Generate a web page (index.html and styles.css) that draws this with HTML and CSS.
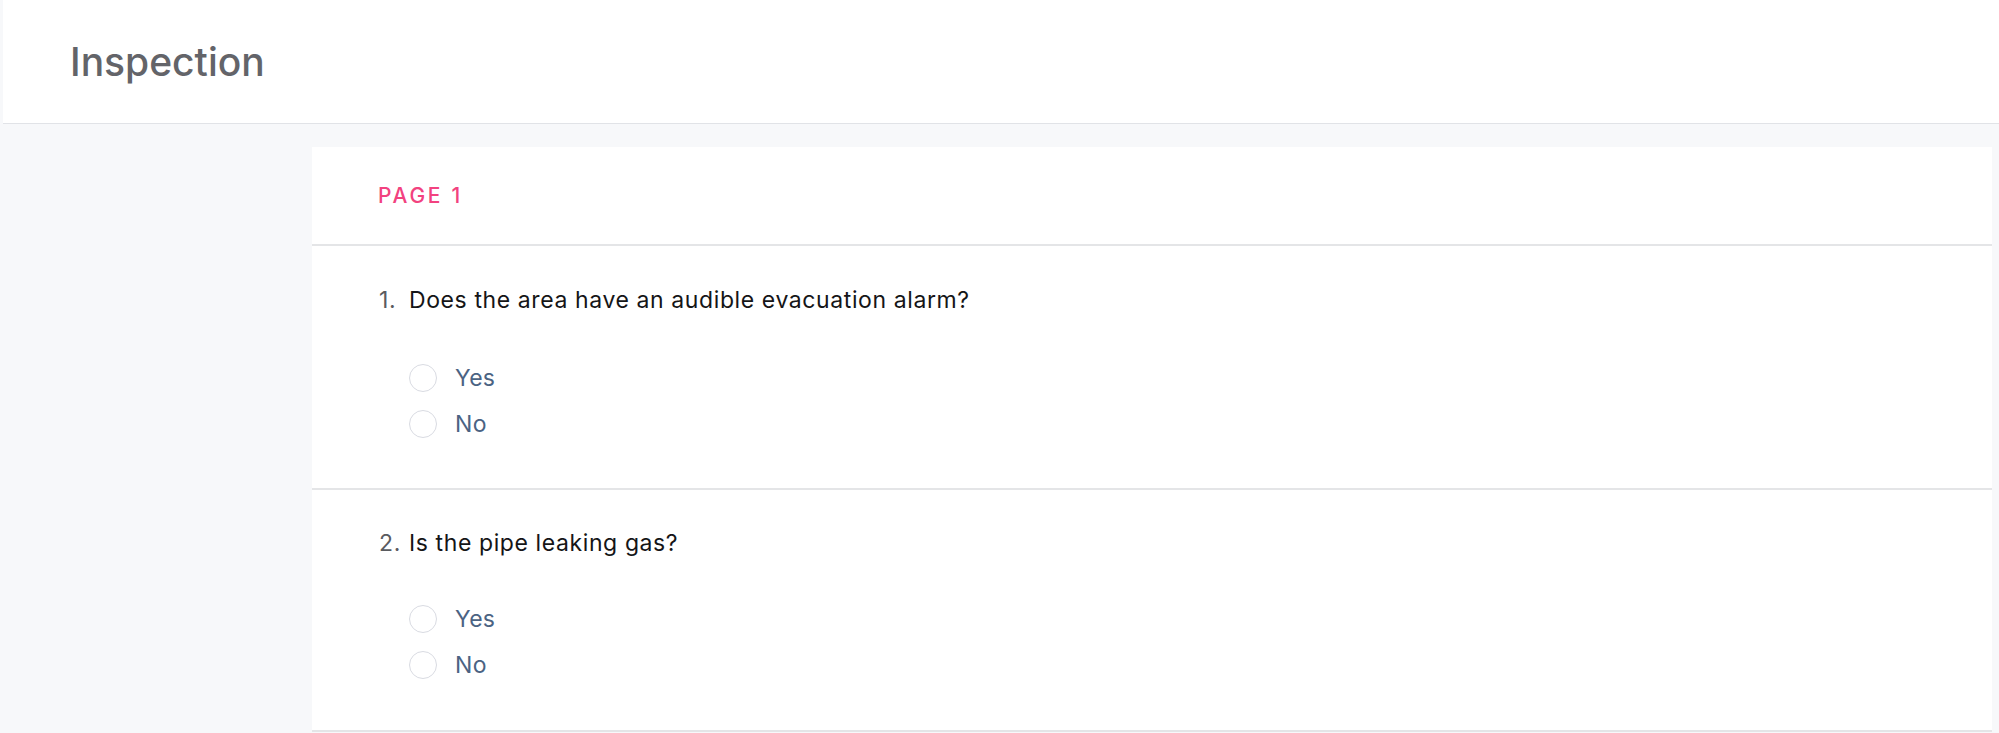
FILE: index.html
```html
<!DOCTYPE html>
<html>
<head>
<meta charset="utf-8">
<title>Inspection</title>
<link rel="stylesheet" href="styles.css">
</head>
<body>
<header class="topbar">
  <h1 class="title">Inspection</h1>
</header>
<main class="main">
  <section class="card">
    <div class="page-head"><span class="page-label">PAGE 1</span></div>
    <div class="question">
      <div class="q-text"><span class="q-num">1.</span><span class="q-body">Does the area have an audible evacuation alarm?</span></div>
      <div class="options">
        <label class="option"><span class="radio"></span><span class="opt-label">Yes</span></label>
        <label class="option"><span class="radio"></span><span class="opt-label">No</span></label>
      </div>
    </div>
    <div class="question">
      <div class="q-text"><span class="q-num">2.</span><span class="q-body">Is the pipe leaking gas?</span></div>
      <div class="options">
        <label class="option"><span class="radio"></span><span class="opt-label">Yes</span></label>
        <label class="option"><span class="radio"></span><span class="opt-label">No</span></label>
      </div>
    </div>
  </section>
</main>
</body>
</html>
```
FILE: styles.css
```css
* { box-sizing: border-box; }
html, body { margin: 0; padding: 0; }
body {
  background: #f7f8fa;
  font-family: "Inter", "Liberation Sans", sans-serif;
  height: 733px;
  overflow: hidden;
}
.topbar {
  margin-left: 3px;
  height: 124px;
  background: #ffffff;
  border-bottom: 1px solid #e1e3e7;
  display: flex;
  align-items: center;
  padding-left: 67px;
}
.title {
  margin: 0;
  font-family: "Inter", "Liberation Sans", sans-serif;
  font-weight: 500;
  font-size: 39px;
  color: #636469;
  letter-spacing: 0;
  line-height: 48px;
}
.main {
  padding: 23px 7px 0 312px;
}
.card {
  background: #ffffff;
  border-bottom: 2px solid #e4e5e7;
}
.page-head {
  height: 99px;
  border-bottom: 2px solid #e4e5e7;
  padding-left: 66px;
  display: flex;
  align-items: center;
}
.page-label {
  color: #f2427f;
  font-size: 21px;
  letter-spacing: 2.7px;
  font-weight: 500;
}
.question {
  padding: 39px 0 0 67px;
  height: 242px;
}
.question + .question {
  border-top: 2px solid #e4e5e7;
  padding-top: 38px;
}
.q-text {
  font-size: 23px;
  line-height: 30px;
  color: #151517;
  display: flex;
  letter-spacing: 0.6px;
}
.q-num {
  color: #5a5b5f;
  width: 30px;
  flex: none;
}
.options {
  margin-top: 46px;
  padding-left: 30px;
  display: flex;
  flex-direction: column;
  gap: 12px;
}
.question + .question .options {
  margin-top: 44px;
}
.option {
  display: flex;
  align-items: center;
  gap: 18px;
  height: 34px;
}
.radio {
  width: 28px;
  height: 28px;
  border-radius: 50%;
  border: 1.5px solid #d9dbe2;
  background: #fff;
  flex: none;
}
.opt-label {
  color: #4b6383;
  font-size: 23px;
  letter-spacing: 0.3px;
}
```
